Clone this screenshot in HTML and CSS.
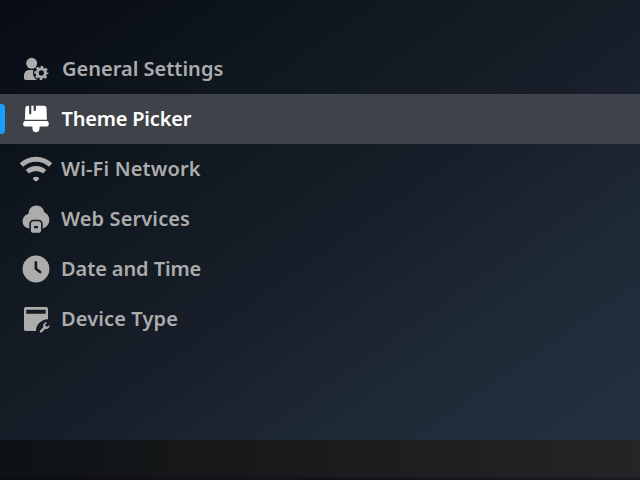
FILE: index.html
```
<!DOCTYPE html>
<html lang="en">
<head>
<meta charset="utf-8">
<title>Settings</title>
<link rel="stylesheet" href="styles.css">
</head>
<body>
<main class="screen">
  <nav class="menu">
    <a class="item general">
      <svg class="icon" viewBox="16 9 40 32">
        <defs><mask id="gear-gap"><path fill="#fff" d="M0 0h60v50H0z"/><circle cx="41.3" cy="28.9" r="8.300" fill="#000"/></mask></defs>
        <circle cx="31.700" cy="19.300" r="5.500"/>
        <path mask="url(#gear-gap)" d="M24 34v-1.800c0-4.700 2.500-6.200 6-6.200h4c2 0 3.500 4 3.500 9.900H26c-1.400 0-2-.5-2-1.900z"/>
        <circle cx="41.300" cy="28.900" r="4.100" class="line" stroke-width="3"/>
        <circle cx="41.300" cy="28.900" r="5.900" class="line" stroke-width="2.400" stroke-dasharray="2.500 2.134" stroke-dashoffset="1.250"/>
      </svg>
      <span class="label">General Settings</span>
    </a>
    <a class="item theme selected">
      <svg class="icon" viewBox="16 9 40 32">
        <path d="M28.200 11.700h.9v7.600c0 1.500 2.200 1.500 2.200 0v-7.600h2.300v4.200c0 1.500 2.300 1.500 2.300 0v-4.200h7.800c2 0 2.900 1 2.900 2.900l.2 11.200H24.900l.4-11.200c0-2 .9-2.900 2.900-2.900z"/>
        <path d="M25.300 26.900h21.400c2.900 0 2.900 5.600 0 5.600h-7.100l-.2 2.800c-.3 4-6.600 4-6.900 0l-.2-2.800h-7c-2.900 0-2.900-5.600 0-5.600z"/>
      </svg>
      <span class="label">Theme Picker</span>
    </a>
    <a class="item wifi">
      <svg class="icon" viewBox="16 9 40 32">
        <path d="M21.300 21.100c8.200-7.800 21.200-7.800 29.400 0M27.300 27.700c5-4.300 12.400-4.300 17.400 0" class="line" stroke-width="4.800"/>
        <path d="M32.800 34.100c1.900-1.700 4.500-1.700 6.400 0l-.5 1.300-1.700 1.500c-.6.6-1.400.6-2 0l-1.700-1.500z"/>
      </svg>
      <span class="label">Wi-Fi Network</span>
    </a>
    <a class="item web">
      <svg class="icon" viewBox="16 9 40 32">
        <defs><mask id="dock-gap"><path fill="#fff" d="M0 0h60v50H0z"/><path d="M29.300 42V30c0-2.600 1.600-4.200 4.200-4.200h5c2.600 0 4.200 1.600 4.200 4.200v12z" fill="#000"/></mask></defs>
        <path mask="url(#dock-gap)" d="M28.500 20c-.1-5 3.100-8.600 7.800-8.600 4.200 0 7.300 2.800 8 6.900 3 1.300 5 4.200 5 7.700 0 4.300-3.200 7.900-7.400 8.500H30c-4.300 0-7.400-3-7.400-7s2.500-6.900 5.900-7.500z"/>
        <path fill-rule="evenodd" d="M33.500 27.200h5c1.800 0 2.600.8 2.600 2.600v6.400c0 1.800-.8 2.600-2.600 2.600h-5c-1.800 0-2.600-.8-2.600-2.600v-6.400c0-1.800.8-2.600 2.600-2.600zm.6 4.900v2.200h3.800v-2.200z"/>
      </svg>
      <span class="label">Web Services</span>
    </a>
    <a class="item date">
      <svg class="icon" viewBox="16 9 40 32">
        <circle cx="36" cy="25" r="13.400"/>
        <path d="M35.900 18.300v6.500l4.200 3.300" class="cut"/>
      </svg>
      <span class="label">Date and Time</span>
    </a>
    <a class="item device">
      <svg class="icon" viewBox="16 9 40 32">
        <path fill-rule="evenodd" d="M26 13h20c1.400 0 2 .7 2 2v10.300c-7.100.5-11.800 5-12 11.700H26c-1.400 0-2-.6-2-2V15c0-1.300.6-2 2-2zm.3 2.700v4h19.400v-4z"/>
        <path d="M47.100 28.400c-2.500-.5-4.700 1.900-3.700 4.600l-3.300 3.400c-1.100 1.200.6 2.900 1.800 1.800l3.400-3.400c2.600.9 4.700-1.200 4-4l-1.900 1.900-1.700-.4-.5-1.900z"/>
      </svg>
      <span class="label">Device Type</span>
    </a>
  </nav>
  <footer class="bar"></footer>
</main>
</body>
</html>
```
FILE: styles.css
```
body {
  margin: 0;
}

.screen {
  box-sizing: border-box;
  display: flex;
  flex-direction: column;
  justify-content: space-between;
  width: 640px;
  height: 480px;
  padding-top: 44px;
  overflow: hidden;
  background: linear-gradient(145deg, #080c14 0%, #101820 30%, #191f2a 53%, #1d2934 70%, #222d3c 84%, #243040 100%);
  font-family: "Noto Sans", sans-serif;
}

.item {
  display: flex;
  align-items: center;
  position: relative;
  height: 50px;
  padding-left: 16px;
  color: #acacac;
}

.selected {
  background: #3f4349;
  color: #fff;
}

.selected::before {
  content: "";
  position: absolute;
  left: 0;
  top: 10px;
  width: 5px;
  height: 30px;
  border-radius: 0 4px 4px 0;
  background: #1a9fff;
}

.icon {
  width: 40px;
  height: 32px;
  flex: none;
  fill: currentColor;
}

.line {
  fill: none;
  stroke: currentColor;
}

.cut {
  fill: none;
  stroke: #121a23;
  stroke-width: 2.6;
  stroke-linecap: round;
  stroke-linejoin: round;
}

.label {
  margin-left: 5px;
  font-size: 20px;
  font-weight: 650;
  line-height: 30px;
  white-space: nowrap;
}

.general .label {
  margin-left: 6px;
}

.theme .label {
  margin-left: 5.5px;
  letter-spacing: -0.2px;
}

.wifi .label {
  letter-spacing: 0.15px;
}

.web .label,
.device .label {
  letter-spacing: 0.12px;
}

.date .label {
  letter-spacing: -0.1px;
}

.bar {
  box-sizing: border-box;
  height: 40px;
  border-bottom: 3px solid rgba(12, 4, 12, 0.3);
  background: linear-gradient(90deg, #0e1214, #18191b 40%, #252528);
  background-clip: border-box;
  background-origin: border-box;
}
```
